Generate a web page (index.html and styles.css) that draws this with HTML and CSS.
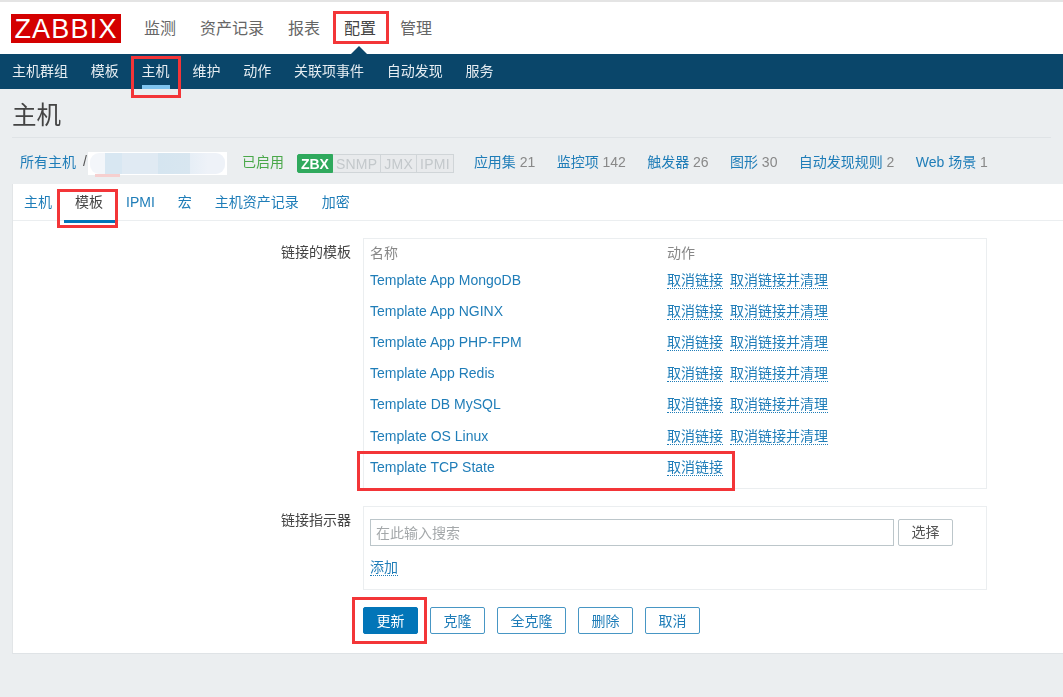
FILE: index.html
```html
<!DOCTYPE html>
<html>
  <head>
    <title>主机 - Zabbix</title>
    <meta charset="utf8">
    <link rel="stylesheet" href="styles.css">
  </head>
  <body>
    <div class="topnav">
      <div class="logo">ZABBIX</div>
      <a>监测</a>
      <a>资产记录</a>
      <a>报表</a>
      <a class="current">配置</a>
      <a>管理</a>
    </div>
    <div class="subnav">
      <a>主机群组</a>
      <a>模板</a>
      <a class="current">主机</a>
      <a>维护</a>
      <a>动作</a>
      <a>关联项事件</a>
      <a>自动发现</a>
      <a>服务</a>
    </div>
    <h1 class="title">主机</h1>
    <div class="hostbar">
      <a>所有主机</a>
      <span class="sep">/</span>
      <span class="hidden-name"><i></i></span>
      <span class="enabled">已启用</span>
      <span class="badges">
        <b class="on">ZBX</b><b>SNMP</b><b>JMX</b><b>IPMI</b>
      </span>
      <span class="counts">
        <span><a>应用集</a> 21</span>
        <span><a>监控项</a> 142</span>
        <span><a>触发器</a> 26</span>
        <span><a>图形</a> 30</span>
        <span><a>自动发现规则</a> 2</span>
        <span><a>Web 场景</a> 1</span>
      </span>
    </div>
    <div class="panel">
      <div class="tabs">
        <a>主机</a>
        <a class="current">模板</a>
        <a>IPMI</a>
        <a>宏</a>
        <a>主机资产记录</a>
        <a>加密</a>
      </div>
      <div class="form">
        <div class="form-label">链接的模板</div>
        <div class="box linked">
          <table>
            <tr>
              <th>名称</th>
              <th>动作</th>
            </tr>
            <tr>
              <td><a>Template App MongoDB</a></td>
              <td><a class="dotted">取消链接</a> <a class="dotted">取消链接并清理</a></td>
            </tr>
            <tr>
              <td><a>Template App NGINX</a></td>
              <td><a class="dotted">取消链接</a> <a class="dotted">取消链接并清理</a></td>
            </tr>
            <tr>
              <td><a>Template App PHP-FPM</a></td>
              <td><a class="dotted">取消链接</a> <a class="dotted">取消链接并清理</a></td>
            </tr>
            <tr>
              <td><a>Template App Redis</a></td>
              <td><a class="dotted">取消链接</a> <a class="dotted">取消链接并清理</a></td>
            </tr>
            <tr>
              <td><a>Template DB MySQL</a></td>
              <td><a class="dotted">取消链接</a> <a class="dotted">取消链接并清理</a></td>
            </tr>
            <tr>
              <td><a>Template OS Linux</a></td>
              <td><a class="dotted">取消链接</a> <a class="dotted">取消链接并清理</a></td>
            </tr>
            <tr>
              <td><a>Template TCP State</a></td>
              <td><a class="dotted">取消链接</a></td>
            </tr>
          </table>
        </div>
        <div class="form-label">链接指示器</div>
        <div class="box indicator">
          <div class="search">
            <input type="text" placeholder="在此输入搜索">
            <button class="btn">选择</button>
          </div>
          <a class="dotted">添加</a>
        </div>
        <div class="actions">
          <button class="btn primary">更新</button>
          <button class="btn">克隆</button>
          <button class="btn wide">全克隆</button>
          <button class="btn">删除</button>
          <button class="btn">取消</button>
        </div>
      </div>
    </div>

    <!-- red boxes somebody drew on top of the screenshot -->
    <div class="mark mark-config"></div>
    <div class="mark mark-host"></div>
    <div class="mark mark-tab"></div>
    <div class="mark mark-row"></div>
    <div class="mark mark-update"></div>
  </body>
</html>
```

FILE: styles.css
```css
html {
  height: 100%;
}

body {
  margin: 0;
  height: 697px;
  position: relative;
  overflow: hidden;
  background-color: #ebeef0;
  color: #555;
  font-family: 'Liberation Sans', 'Noto Sans CJK SC', sans-serif;
  font-size: 14px;
  filter: blur(0.35px);
}

a {
  color: #1f7db8;
}

.topnav {
  height: 52px;
  border-top: 2px solid #e4e4e4;
  background-color: #fff;
  display: flex;
  align-items: center;
  position: relative;
}

.topnav a {
  color: #666;
  font-size: 16px;
  line-height: 22px;
  margin: 1px 24px 0 0;
}

.topnav a.current {
  color: #444;
}

.topnav a.current::after {
  content: '';
  position: absolute;
  left: 351px;
  bottom: 0;
  border: 8px solid transparent;
  border-top: 0;
  border-bottom-color: #0a466a;
}

.logo {
  width: 110px;
  height: 29px;
  margin: 0 23px 0 11px;
  background-color: #d40000;
  color: #fff;
  font-size: 27px;
  line-height: 30px;
  letter-spacing: 1.2px;
  text-align: center;
}

.subnav {
  height: 35px;
  padding-left: 12px;
  background-color: #0a466a;
  display: flex;
  align-items: center;
  gap: 22.8px;
}

.subnav a {
  color: #e6edf2;
  height: 35px;
  line-height: 35px;
  position: relative;
}

.subnav a.current::after {
  content: '';
  position: absolute;
  left: 0;
  right: 0;
  bottom: 0;
  height: 4px;
  background-color: #7fc4ef;
}

.title {
  margin: 0 12px;
  height: 48px;
  border-bottom: 1px solid #dfe3e6;
  color: #444;
  font-size: 24.5px;
  font-weight: normal;
  line-height: 54px;
}

.hostbar {
  height: 46px;
  padding-left: 20px;
  display: flex;
  align-items: center;
  color: #888;
}

.sep {
  margin: 0 1px 0 7px;
  color: #555;
}

.hidden-name {
  width: 139px;
  height: 23px;
  margin-top: 4px;
  background-color: #fff;
  display: flex;
  align-items: center;
  justify-content: center;
  position: relative;
}

.hidden-name i {
  width: 135px;
  height: 21px;
  border-radius: 9px;
  background: linear-gradient(to right,
    #f3f6fa 15px, #d8e7f2 15px, #d8e7f2 32px, #e0eaf3 32px, #e0eaf3 68px,
    #d5e5f0 68px, #d8e6f0 100px, #e6eef6 100px, #eef2f8 118px);
}

.hidden-name::after {
  content: '';
  position: absolute;
  left: 7px;
  bottom: -2px;
  width: 25px;
  height: 3px;
  background-color: #f6cfcf;
}

.enabled {
  margin: 0 13px 0 15px;
  color: #4aa84a;
}

.badges {
  display: flex;
  height: 19px;
  margin-top: 5px;
  border-radius: 2px;
  font-family: 'Liberation Sans', sans-serif;
}

.badges b {
  padding: 0 3px;
  border: 1px solid #d0d5d8;
  border-left-width: 0;
  background-color: #e8eaec;
  color: #c3c8cb;
  font-size: 14px;
  font-weight: normal;
  line-height: 18px;
  letter-spacing: 0.25px;
}

.badges b.on {
  padding: 0 3px;
  border: 1px solid #2fa95d;
  border-radius: 2px 0 0 2px;
  background-color: #2fa95d;
  color: #fff;
  font-weight: bold;
  letter-spacing: 0;
}

.counts {
  margin-left: 20px;
  display: flex;
  gap: 21.3px;
}

.panel {
  margin-left: 12px;
  height: 469px;
  border-left: 1px solid #e2e5e7;
  border-bottom: 1px solid #dfe3e6;
  background-color: #fff;
}

.tabs {
  height: 36px;
  padding-left: 11px;
  border-bottom: 1px solid #ebeef0;
  display: flex;
  gap: 23px;
}

.tabs a {
  line-height: 36px;
  position: relative;
}

.tabs a.current {
  color: #444;
}

.tabs a.current::after {
  content: '';
  position: absolute;
  left: -11px;
  right: -12px;
  top: 36px;
  height: 3px;
  background-color: #0275b8;
}

.form {
  display: grid;
  grid-template-columns: 338px 624px;
  column-gap: 12px;
  padding-top: 17px;
}

.form-label {
  padding-top: 3px;
  color: #444;
  text-align: right;
}

.box {
  border: 1px solid #ebeef0;
  padding: 0 6px;
}

.linked {
  height: 249px;
  margin-bottom: 17px;
}

table {
  border-collapse: collapse;
}

th {
  width: 297px;
  height: 23px;
  padding: 2px 0 0;
  color: #888;
  font-weight: normal;
  line-height: 20px;
  text-align: left;
}

td {
  height: 31.2px;
  padding: 0;
  line-height: 20px;
}

.dotted {
  margin-right: 3px;
  border-bottom: 1px dotted #1f7db8;
}

.indicator {
  height: 82px;
  margin-bottom: 17px;
  line-height: 20px;
}

.search {
  display: flex;
  gap: 4px;
  margin: 12px 0 11px;
}

input {
  box-sizing: border-box;
  width: 524px;
  height: 27px;
  padding: 0 5px;
  border: 1px solid #bcc6ca;
  font: inherit;
}

input::placeholder {
  color: #a4a8aa;
}

.btn {
  box-sizing: border-box;
  width: 55px;
  height: 27px;
  padding: 0 0 2px;
  border: 1px solid #4796c4;
  border-radius: 2px;
  background-color: #fff;
  color: #1f7db8;
  font: inherit;
}

.search .btn {
  border-color: #bcc6ca;
  color: #555;
}

.btn.primary {
  background-color: #0275b8;
  border-color: #0275b8;
  color: #fff;
}

.btn.wide {
  width: 69px;
}

.actions {
  grid-column: 2;
  display: flex;
  gap: 12px;
}

.mark {
  position: absolute;
  box-sizing: border-box;
  border: 3px solid #f33538;
}

.mark-config {
  left: 333px;
  top: 11px;
  width: 56px;
  height: 33px;
}

.mark-host {
  left: 131px;
  top: 56px;
  width: 50px;
  height: 42px;
}

.mark-tab {
  left: 57px;
  top: 189px;
  width: 61px;
  height: 39px;
}

.mark-row {
  left: 357px;
  top: 451px;
  width: 378px;
  height: 40px;
}

.mark-update {
  left: 352px;
  top: 597px;
  width: 75px;
  height: 47px;
}
```
